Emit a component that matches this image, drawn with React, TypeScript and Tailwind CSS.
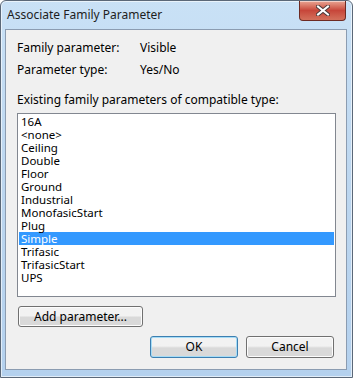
const items = [
  "16A",
  "<none>",
  "Ceiling",
  "Double",
  "Floor",
  "Ground",
  "Industrial",
  "MonofasicStart",
  "Plug",
  "Simple",
  "Trifasic",
  "TrifasicStart",
  "UPS",
];

function CloseButton() {
  return (
    <div className="mt-0 flex h-[20px] w-[47px] items-center justify-center rounded-b-[4px] border border-t-0 border-[#6d2a22] bg-gradient-to-b from-[#e8a493] via-[#c7463a] to-[#d3705c] shadow-[inset_0_1px_0_rgba(255,255,255,0.5)]">
      <svg width="14" height="11" viewBox="0 0 14 11">
        <path
          d="M2 1.5 L12 9.5 M12 1.5 L2 9.5"
          stroke="#4a3a3a"
          strokeWidth="4"
          strokeLinecap="square"
        />
        <path
          d="M2 1.5 L12 9.5 M12 1.5 L2 9.5"
          stroke="#ffffff"
          strokeWidth="2"
          strokeLinecap="square"
        />
      </svg>
    </div>
  );
}

function WinButton({ label, primary, className }: { label: string; primary?: boolean; className?: string }) {
  return (
    <div
      className={
        "flex items-center justify-center rounded-[3px] border bg-gradient-to-b from-[#f2f2f2] from-45% to-[#d9d9d9] to-55% text-[12px] text-black " +
        (primary
          ? "border-[#3c7fb1] shadow-[inset_0_0_0_1px_#a6dcf6] "
          : "border-[#707070] shadow-[inset_0_0_0_1px_#fcfcfc] ") +
        (className ?? "")
      }
    >
      {label}
    </div>
  );
}

export default function App() {
  return (
    <div className="h-[379px] w-[354px] bg-white" style={{ fontFamily: '"Noto Sans", sans-serif' }}>
      <div className="flex h-[378px] w-[353px] flex-col rounded-t-[6px] border border-[#5b6878] bg-gradient-to-b from-[#c9e1f6] via-[#bcd6ef] to-[#b4d1ee] shadow-[inset_0_0_0_1px_rgba(255,255,255,0.6)]">
        {/* title bar */}
        <div className="flex h-[28px] shrink-0 items-start justify-between pl-[6px] pr-[6px]">
          <div className="pt-[6px] text-[12px] leading-[16px] text-[#1e1e1e]">Associate Family Parameter</div>
          <CloseButton />
        </div>

        {/* client area */}
        <div className="ml-[4px] flex h-[341px] w-[342px] flex-col border border-[#8b9cb1] bg-[#f0f0f0] pl-[11px] pt-[10px] text-[12px] leading-[16px] text-black">
          <div className="flex h-[22px]">
            <span className="w-[123px]">Family parameter:</span>
            <span>Visible</span>
          </div>
          <div className="flex h-[22px]">
            <span className="w-[123px]">Parameter type:</span>
            <span>Yes/No</span>
          </div>
          <div className="mt-[8px] h-[21px]">Existing family parameters of compatible type:</div>

          <div className="h-[184px] w-[319px] border border-[#828790] bg-white p-[1px]">
            {items.map((it) => (
              <div
                key={it}
                className={
                  "h-[13px] pl-[2px] text-[11.5px] leading-[13px] " +
                  (it === "Simple" ? "bg-[#3399ff] text-white" : "text-black")
                }
              >
                {it}
              </div>
            ))}
          </div>

          <WinButton label="Add parameter..." className="ml-[1px] mt-[9px] h-[21px] w-[125px]" />

          <div className="mt-[9px] flex gap-[8px] pl-[133px]">
            <WinButton label="OK" primary className="h-[22px] w-[88px]" />
            <WinButton label="Cancel" className="h-[22px] w-[88px]" />
          </div>
        </div>
      </div>
    </div>
  );
}
